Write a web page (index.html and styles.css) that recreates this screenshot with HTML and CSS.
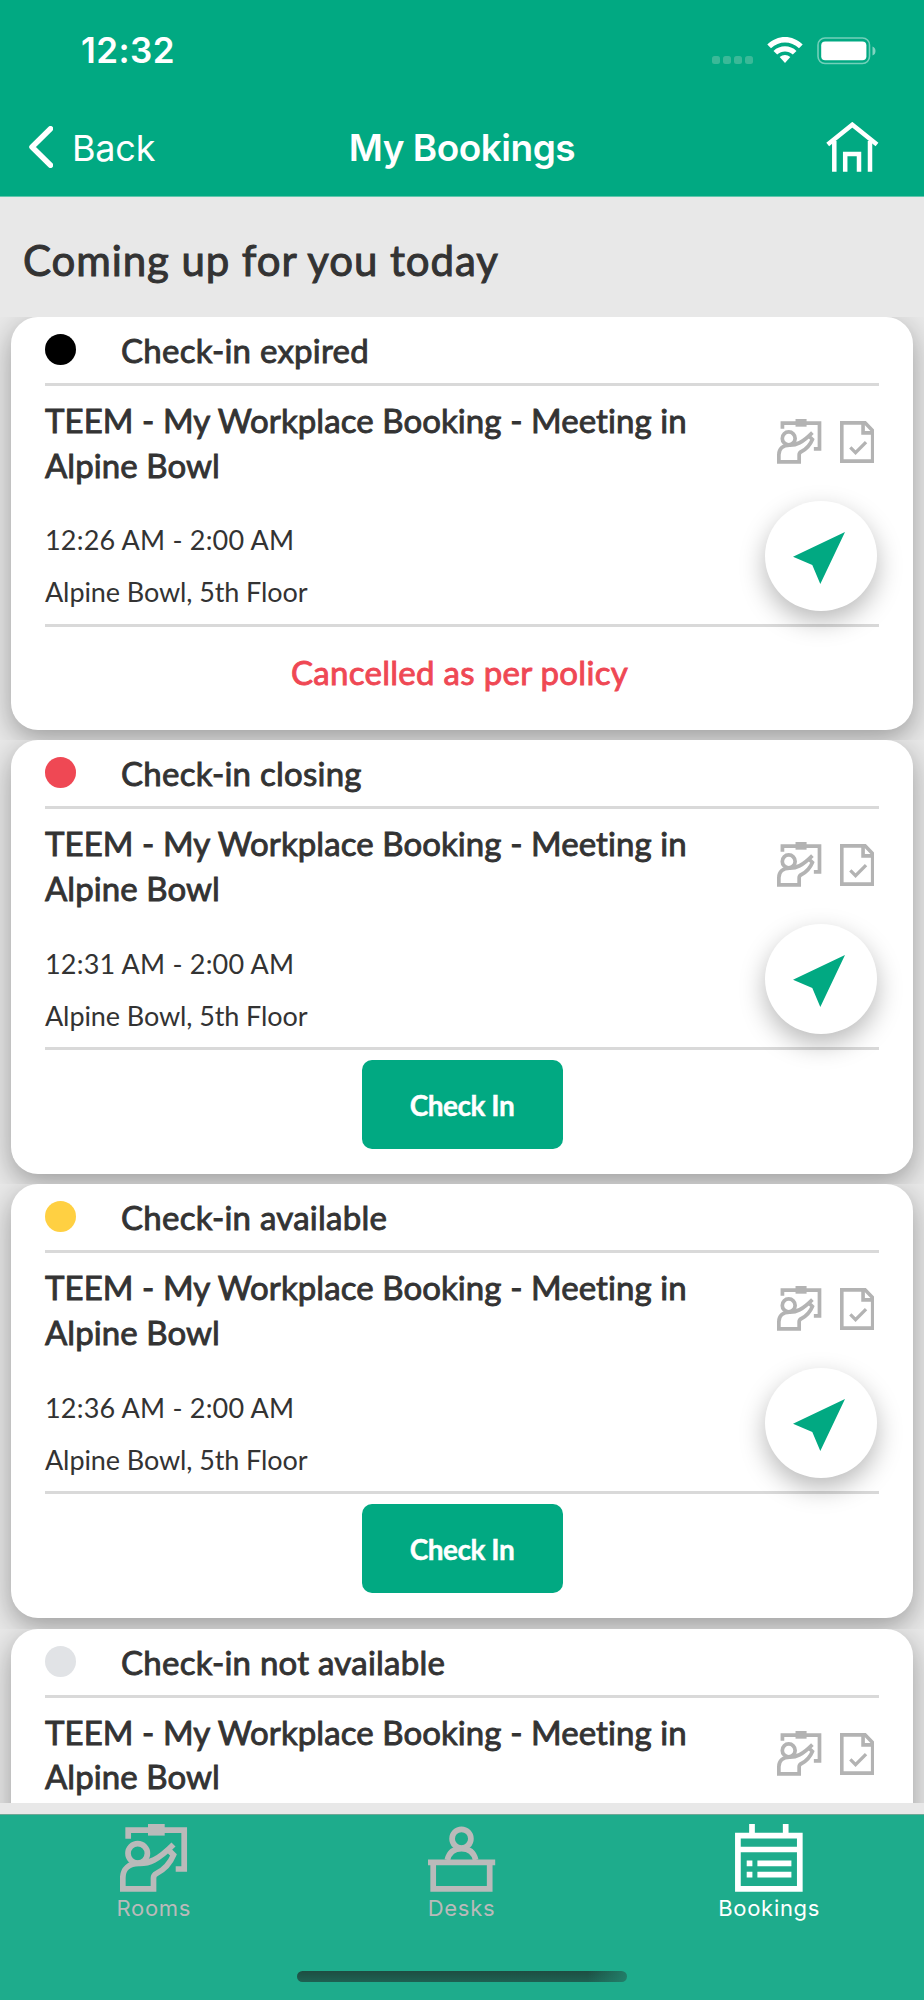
FILE: index.html
```html
<!DOCTYPE html>
<html lang="en">
<head>
    <meta charset="utf-8" />
    <title>My Bookings</title>
    <link rel="stylesheet" href="styles.css">
</head>
<body>
    <!-- shared icons -->
    <svg class="sprite" width="0" height="0">
        <symbol id="icoRoom" viewBox="0 0 68 68">
            <path d="M8.2 14.7V6.2H64.2V45H55.7" />
            <path d="M28 5.8H44.7" stroke-width="11.6" />
            <circle cx="17.7" cy="29.3" r="9.7" />
            <path d="M53.5 20.5C38 36 29 39.7 19 39.4C9 39.4 2.8 45 2.8 54V64.8H33.5V54Q33.5 51 36.5 49.5C44.5 45.5 50 39.5 53.5 31L48.5 26" />
        </symbol>
        <symbol id="icoDoc" viewBox="0 0 34.4 41.8">
            <path d="M1.8 1.8H25L32.6 9.8V40H1.8Z" />
            <path d="M23 2V11.8H32" />
            <path d="M10.3 26.3L15.5 31.5L26 21" stroke-width="3.3" />
        </symbol>
        <symbol id="icoNav" viewBox="0 0 52 52">
            <path d="M52 0L0 24.7L19.3 33L27.3 52Z" />
        </symbol>
    </svg>

    <div class="header">
        <div class="statusbar">
            <span class="clock">12:32</span>
            <div class="signal"><i></i><i></i><i></i><i></i></div>
            <svg class="wifi" width="36" height="27" viewBox="0 0 36 27">
                <path d="M0.3 7.6C10.5 -2.4 25.5 -2.4 35.7 7.6L32 11.3C24 3.5 12 3.5 4 11.3Z" />
                <path d="M6.5 13.9C13 7.7 23 7.7 29.5 13.9L25.8 17.6C21.3 13.4 14.7 13.4 10.2 17.6Z" />
                <path d="M12.7 20.1C15.8 17.3 20.2 17.3 23.3 20.1L18 26Z" />
            </svg>
            <svg class="battery" width="60" height="28" viewBox="0 0 60 28">
                <rect x="1" y="1" width="51.5" height="25.5" rx="7" fill="none" stroke="#fff" stroke-width="1.6" opacity="0.45" />
                <rect x="4.2" y="4.4" width="45.2" height="18.8" rx="4" fill="#fff" />
                <path d="M55.5 9.5Q58.5 10.5 58.5 14T55.5 18.5Z" fill="#fff" opacity="0.5" />
            </svg>
        </div>
        <div class="navbar">
            <a class="back">
                <svg width="25" height="42" viewBox="0 0 25 42">
                    <path d="M22.5 2.8L4 21L22.5 39.2" />
                </svg>
                <span>Back</span>
            </a>
            <h1>My Bookings</h1>
            <svg class="home" width="53" height="50" viewBox="0 0 53 50">
                <path d="M1.7 22.5L26.3 2.7L51 22.5" />
                <path d="M8.3 19V49.7M44 19V49.7" />
                <path d="M19.2 49.7V32H33V49.7" />
            </svg>
        </div>
    </div>

    <h2 class="heading">Coming up for you today</h2>

    <div class="list">
        <div class="cell short">
            <div class="card">
                <div class="status"><i class="dot expired"></i><span>Check-in expired</span></div>
                <div class="detail">
                    <div class="text">
                        <h3>TEEM - My Workplace Booking - Meeting in<br>Alpine Bowl</h3>
                        <p>12:26 AM - 2:00 AM</p>
                        <p class="place">Alpine Bowl, 5th Floor</p>
                    </div>
                    <div class="side">
                        <div class="icons">
                            <svg class="room"><use href="#icoRoom" /></svg>
                            <svg class="doc"><use href="#icoDoc" /></svg>
                        </div>
                        <div class="fab"><svg><use href="#icoNav" /></svg></div>
                    </div>
                </div>
                <div class="policy">Cancelled as per policy</div>
            </div>
        </div>

        <div class="cell">
            <div class="card">
                <div class="status"><i class="dot closing"></i><span>Check-in closing</span></div>
                <div class="detail">
                    <div class="text">
                        <h3>TEEM - My Workplace Booking - Meeting in<br>Alpine Bowl</h3>
                        <p>12:31 AM - 2:00 AM</p>
                        <p class="place">Alpine Bowl, 5th Floor</p>
                    </div>
                    <div class="side">
                        <div class="icons">
                            <svg class="room"><use href="#icoRoom" /></svg>
                            <svg class="doc"><use href="#icoDoc" /></svg>
                        </div>
                        <div class="fab"><svg><use href="#icoNav" /></svg></div>
                    </div>
                </div>
                <button class="checkin">Check In</button>
            </div>
        </div>

        <div class="cell">
            <div class="card">
                <div class="status"><i class="dot available"></i><span>Check-in available</span></div>
                <div class="detail">
                    <div class="text">
                        <h3>TEEM - My Workplace Booking - Meeting in<br>Alpine Bowl</h3>
                        <p>12:36 AM - 2:00 AM</p>
                        <p class="place">Alpine Bowl, 5th Floor</p>
                    </div>
                    <div class="side">
                        <div class="icons">
                            <svg class="room"><use href="#icoRoom" /></svg>
                            <svg class="doc"><use href="#icoDoc" /></svg>
                        </div>
                        <div class="fab"><svg><use href="#icoNav" /></svg></div>
                    </div>
                </div>
                <button class="checkin">Check In</button>
            </div>
        </div>

        <div class="cell">
            <div class="card">
                <div class="status"><i class="dot"></i><span>Check-in not available</span></div>
                <div class="detail">
                    <div class="text">
                        <h3>TEEM - My Workplace Booking - Meeting in<br>Alpine Bowl</h3>
                    </div>
                    <div class="side">
                        <div class="icons">
                            <svg class="room"><use href="#icoRoom" /></svg>
                            <svg class="doc"><use href="#icoDoc" /></svg>
                        </div>
                    </div>
                </div>
            </div>
        </div>
    </div>

    <div class="tabbar">
        <div class="tabs">
            <a class="tab">
                <svg width="68" height="68"><use href="#icoRoom" /></svg>
                <span>Rooms</span>
            </a>
            <a class="tab">
                <svg width="68" height="68" viewBox="0 0 68 68">
                    <circle cx="33.5" cy="14.7" r="9.4" />
                    <path d="M19.3 36C21 29 26 24.7 33.5 24.7S46 29 47.7 36" />
                    <path d="M0 38.3H67.2M5.2 38V64.8H61.7V38" />
                </svg>
                <span>Desks</span>
            </a>
            <a class="tab active">
                <svg width="68" height="68" viewBox="0 0 68 68">
                    <path d="M2.9 11.6H64.8V64.8H2.9ZM2.9 25.5H64.8M17 0V10M50.7 0V10" />
                    <path d="M11.7 39.3H17.4M22.4 39.3H56.4M11.7 50.7H17.4M22.4 50.7H56.4" />
                </svg>
                <span>Bookings</span>
            </a>
        </div>
        <div class="indicator"></div>
    </div>
</body>
</html>
```
FILE: styles.css
```css
* {
    box-sizing: border-box;
}

body {
    margin: 0;
    width: 924px;
    height: 2000px;
    overflow: hidden;
    display: flex;
    flex-direction: column;
    background-color: #e8e8e8;
    color: #333;
    font-family: Lato, "Liberation Sans", sans-serif;
    font-variant-ligatures: none;
}

h1, h2, h3, p {
    margin: 0;
}

svg {
    display: block;
}

.sprite {
    display: none;
}

/* header */
.header {
    height: 197px;
    flex: none;
    background-color: #01a982;
    border-bottom: 1px solid #5fc6ac;
    color: #fff;
    font-family: Inter, "Liberation Sans", sans-serif;
}

.statusbar {
    display: flex;
    height: 100px;
    padding-right: 46px;
}

.clock {
    width: 630px;
    padding-left: 81px;
    font-size: 35px;
    font-weight: 600;
    line-height: 101px;
    letter-spacing: 0.4px;
}

.signal {
    display: flex;
    gap: 3.5px;
    margin: 56px 0 0 82px;
}

    .signal i {
        width: 7.5px;
        height: 7.5px;
        border-radius: 2.5px;
        background-color: #3ab998;
    }

.wifi {
    margin: 37px 0 0 14px;
    fill: #fff;
}

.battery {
    margin: 36.5px 0 0 14px;
}

.navbar {
    display: grid;
    grid-template-columns: 300px 1fr 300px;
    height: 96px;
}

.back {
    display: flex;
    padding-left: 28px;
    font-size: 36px;
    line-height: 96px;
    letter-spacing: -0.2px;
}

    .back svg {
        margin: 26px 19px 0 0;
        fill: none;
        stroke: #fff;
        stroke-width: 5.5;
        stroke-linecap: round;
        stroke-linejoin: round;
    }

.navbar h1 {
    font-size: 37px;
    font-weight: 600;
    line-height: 95px;
    letter-spacing: -0.5px;
    text-align: center;
    white-space: nowrap;
}

.home {
    justify-self: end;
    margin: 22px 45px 0 0;
    fill: none;
    stroke: #fff;
    stroke-width: 4.5;
}

.heading {
    height: 120px;
    flex: none;
    padding-left: 23px;
    font-size: 42px;
    font-weight: 400;
    line-height: 127px;
    letter-spacing: 0.9px;
    -webkit-text-stroke: 1px #333;
}

/* booking cards */
.list {
    height: 1486px;
    flex: none;
    overflow: hidden;
}

.cell {
    height: 444.2px;
    padding: 0 11px;
    overflow: hidden;
}

    .cell.short {
        height: 423.2px;
    }

.card {
    height: 433.5px;
    padding: 0 34px;
    border-radius: 27px;
    background-color: #fff;
    box-shadow: 0 9px 28px rgba(0, 0, 0, 0.33);
}

.short .card {
    height: 412.5px;
}

.status {
    display: flex;
    height: 69px;
    border-bottom: 3px solid #d9d9d9;
    font-size: 33px;
    line-height: 67px;
    letter-spacing: 0.25px;
    -webkit-text-stroke: 0.9px #333;
}

.dot {
    width: 31px;
    height: 31px;
    margin: 17px 45px 0 0;
    border-radius: 50%;
    background-color: #e1e3e6;
}

    .dot.expired {
        background-color: #000;
    }

    .dot.closing {
        background-color: #ef4854;
    }

    .dot.available {
        background-color: #ffd042;
    }

.detail {
    display: flex;
    justify-content: space-between;
    height: 240.5px;
    border-bottom: 3px solid #d9d9d9;
}

.text {
    padding-top: 12px;
}

    .text h3 {
        margin-bottom: 27px;
        font-size: 33px;
        font-weight: 400;
        line-height: 44.7px;
        letter-spacing: 0.08px;
        white-space: nowrap;
        -webkit-text-stroke: 0.9px #333;
    }

    .text p {
        font-size: 27px;
        line-height: 52px;
        letter-spacing: 0.2px;
    }

    .text .place {
        letter-spacing: -0.1px;
    }

.side {
    display: flex;
    flex-direction: column;
    align-items: flex-end;
    padding: 33px 2px 0 0;
}

.icons {
    display: flex;
    gap: 18px;
    height: 82px;
    padding-right: 3px;
    fill: none;
    stroke: #b3b3b3;
}

.room {
    width: 45px;
    height: 45px;
    stroke-width: 5.6;
}

.doc {
    width: 34.5px;
    height: 42px;
    margin-top: 2px;
    stroke-width: 3.6;
}

.fab {
    width: 112px;
    height: 110px;
    flex: none;
    padding: 31px 0 0 28px;
    border-radius: 50%;
    background-color: #fff;
    box-shadow: 0 10px 26px rgba(0, 0, 0, 0.28);
}

    .fab svg {
        width: 52px;
        height: 52px;
        fill: #01a982;
    }

.policy {
    padding-right: 5px;
    color: #ef4854;
    font-size: 33px;
    line-height: 90px;
    letter-spacing: 0.3px;
    text-align: center;
    -webkit-text-stroke: 0.9px #ef4854;
}

.checkin {
    display: block;
    width: 201px;
    height: 89px;
    margin: 10.5px auto 0;
    padding: 1px 0 0;
    border: none;
    border-radius: 10px;
    background-color: #01a982;
    color: #fff;
    font-family: inherit;
    font-size: 28px;
    font-weight: 700;
    letter-spacing: -0.5px;
    -webkit-text-stroke: 0.4px #fff;
}

/* bottom tabs */
.tabbar {
    height: 186px;
    flex: none;
    margin-top: 11px;
    border-top: 1px solid #6fa796;
    background-color: #1eac8c;
    font-family: Inter, "Liberation Sans", sans-serif;
}

.tabs {
    display: flex;
    height: 156px;
    padding: 8.5px 1px 0 0;
}

.tab {
    display: flex;
    flex-direction: column;
    align-items: center;
    flex: 1;
    color: #bababa;
    font-size: 22px;
    line-height: 32px;
    letter-spacing: 0.7px;
}

    .tab svg {
        fill: none;
        stroke: #bababa;
        stroke-width: 5.7;
    }

    .tab.active {
        color: #fff;
    }

        .tab.active svg {
            stroke: #fff;
        }

.indicator {
    width: 330px;
    height: 11px;
    margin: 0 auto;
    border-radius: 6px;
    background: linear-gradient(to right, transparent 88%, rgba(35, 135, 112, 0.8)), linear-gradient(#1e4d42, #1e6152);
}
```
